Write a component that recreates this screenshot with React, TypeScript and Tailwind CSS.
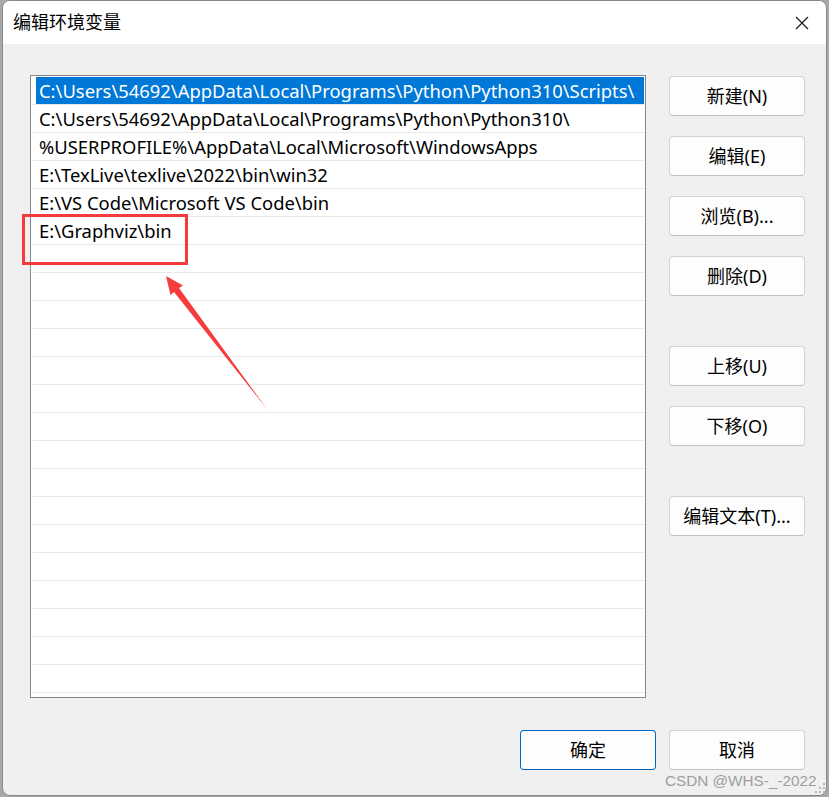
import React from 'react';

const font = "font-['Noto_Sans','Noto_Sans_CJK_SC',sans-serif]";

const paths = [
  'C:\\Users\\54692\\AppData\\Local\\Programs\\Python\\Python310\\Scripts\\',
  'C:\\Users\\54692\\AppData\\Local\\Programs\\Python\\Python310\\',
  '%USERPROFILE%\\AppData\\Local\\Microsoft\\WindowsApps',
  'E:\\TexLive\\texlive\\2022\\bin\\win32',
  'E:\\VS Code\\Microsoft VS Code\\bin',
  'E:\\Graphviz\\bin',
];

const sideButtons = [
  { label: '新建(N)', gap: 'mt-[1px]' },
  { label: '编辑(E)', gap: 'mt-[20px]' },
  { label: '浏览(B)...', gap: 'mt-[20px]' },
  { label: '删除(D)', gap: 'mt-[20px]' },
  { label: '上移(U)', gap: 'mt-[50px]' },
  { label: '下移(O)', gap: 'mt-[20px]' },
  { label: '编辑文本(T)...', gap: 'mt-[50px]' },
];

const Button = ({ label, primary, className = '' }: { label: string; primary?: boolean; className?: string }) => (
  <div
    className={`w-[136px] h-[40px] flex items-center justify-center rounded-[4px] bg-[#fdfdfd] text-[18px] text-black ${
      primary ? 'border border-[#0067c0] border-b-[#005fb8]' : 'border border-[#d2d2d2] border-b-[#bfbfbf]'
    } ${className}`}
  >
    {label}
  </div>
);

const App = () => {
  const rows = Array.from({ length: 23 }, (_, i) => paths[i] ?? '');

  return (
    <div className={`relative w-[829px] h-[797px] overflow-hidden bg-[#a8a8a8] pl-[2px] ${font}`}>
      <div className="w-[825px] h-[796px] flex flex-col bg-[#f0f0f0] border border-[#8a8a8a] rounded-[8px] overflow-hidden">
        {/* Title bar */}
        <div className="h-[43px] bg-white flex items-center justify-between pl-[10px] pr-[16px]">
          <span className="text-[18px] text-black">编辑环境变量</span>
          <svg width="14" height="14" viewBox="0 0 14 14" className="mr-[1px]">
            <path d="M1 1 L13 13 M13 1 L1 13" stroke="#1a1a1a" strokeWidth="1.2" />
          </svg>
        </div>

        {/* Body */}
        <div className="flex-1 pl-[27px] pr-[21px] pt-[31px]">
          <div className="flex">
            <div className="w-[616px] h-[623px] border border-[#828790] bg-white overflow-hidden pt-[1px]">
              {rows.map((p, i) => (
                <div key={i} className="h-[28px] ml-[2px] mr-[1px] border-b border-[#e8e8e8] flex">
                  <div
                    className={`flex-1 ml-[3px] flex items-center px-[3px] pt-[1px] text-[18.4px] whitespace-nowrap ${
                      i === 0 ? 'bg-[#0078d7] text-white' : 'text-black'
                    }`}
                  >
                    {p}
                  </div>
                </div>
              ))}
            </div>

            <div className="ml-[23px] flex flex-col">
              {sideButtons.map((b) => (
                <Button key={b.label} label={b.label} className={b.gap} />
              ))}
            </div>
          </div>

          <div className="flex justify-end gap-[13px] mt-[32px]">
            <Button label="确定" primary />
            <Button label="取消" />
          </div>
        </div>
      </div>

      {/* annotation */}
      <div className="absolute left-[22px] top-[214px] w-[166px] h-[51px] border-[3px] border-[#f53b3b]" />
      <svg className="absolute left-0 top-0" width="829" height="797">
        <polygon
          points="166,276 183,285.5 179,288 267,409 174,292 170.5,295"
          fill="#f53b3b"
        />
      </svg>

      {/* watermark */}
      <div className="absolute left-[665px] top-[772px] text-[15.3px] leading-[18px] text-[#9e9e9e] font-['Liberation_Sans',sans-serif]">
        CSDN @WHS-_-2022
      </div>
      <svg className="absolute left-[815px] top-[783px]" width="12" height="12" viewBox="0 0 12 12">
        <rect x="8" y="0" width="2" height="2" fill="#b5b5b5" />
        <rect x="4" y="4" width="2" height="2" fill="#b5b5b5" />
        <rect x="8" y="4" width="2" height="2" fill="#b5b5b5" />
        <rect x="0" y="8" width="2" height="2" fill="#b5b5b5" />
        <rect x="4" y="8" width="2" height="2" fill="#b5b5b5" />
        <rect x="8" y="8" width="2" height="2" fill="#b5b5b5" />
      </svg>
    </div>
  );
};

export default App;
